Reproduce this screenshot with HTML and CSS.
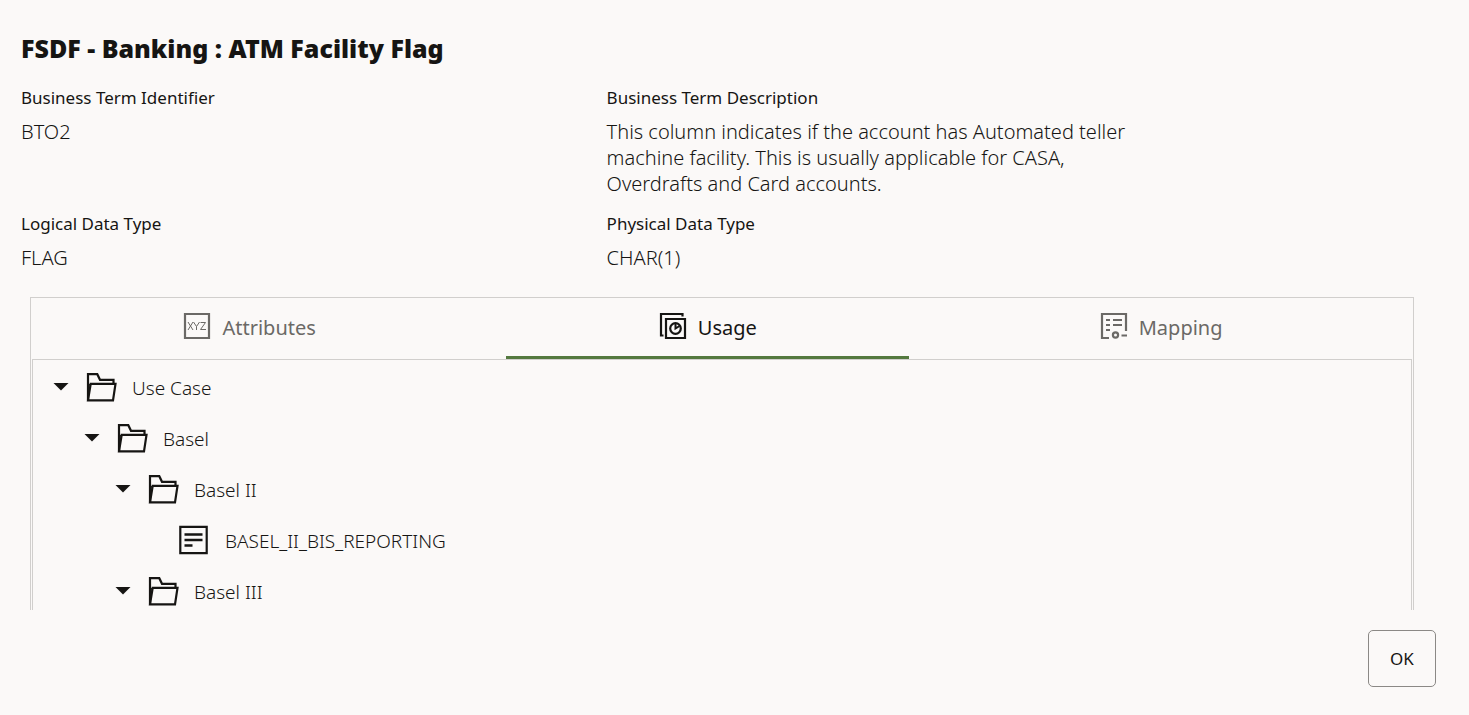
FILE: index.html
```html
<!DOCTYPE html>
<html lang="en">
<head>
  <meta charset="UTF-8" />
  <title>FSDF - Banking : ATM Facility Flag</title>
  <link rel="stylesheet" href="styles.css">
</head>
<body>
  <svg class="sprite" width="0" height="0" aria-hidden="true">
    <symbol id="folder" viewBox="0 0 32 30">
      <path d="M3 28V2.200h9.300l2.700 5.600H28.500V12" fill="none" stroke="currentColor" stroke-width="2.200" />
      <path d="M3 28.300L5.700 11.800H30.500L28 28.300H3z" fill="none" stroke="currentColor" stroke-width="2.200" />
      <path d="M2 12h3L3 26z" fill="currentColor" />
    </symbol>
    <symbol id="document" viewBox="0 0 32 30">
      <path d="M2.300 1.800h26.400v26.400H2.300z" fill="none" stroke="currentColor" stroke-width="2.200" />
      <path d="M6.500 9.500h18M6.500 15h18M6.500 20.500h8" stroke="currentColor" stroke-width="2.400" />
    </symbol>
  </svg>

  <main class="dialog">
    <h1>FSDF - Banking : ATM Facility Flag</h1>

    <dl class="details">
      <div>
        <dt>Business Term Identifier</dt>
        <dd>BTO2</dd>
      </div>
      <div>
        <dt>Business Term Description</dt>
        <dd>This column indicates if the account has Automated teller machine facility. This is usually applicable for CASA, Overdrafts and Card accounts.</dd>
      </div>
      <div class="first">
        <dt>Logical Data Type</dt>
        <dd>FLAG</dd>
      </div>
      <div>
        <dt>Physical Data Type</dt>
        <dd>CHAR(1)</dd>
      </div>
    </dl>

    <section class="panel">
      <div class="tabs" role="tablist">
        <button type="button" class="tab" role="tab" aria-selected="false">
          <svg class="tab-icon" viewBox="0 0 28 28" aria-hidden="true">
            <path d="M2 2h24v24H2z" fill="none" stroke="currentColor" stroke-width="2.200" />
            <path d="M5 10l5 8M10 10L5 18M10.500 10l3 4.500 3-4.500M13.500 14.500V18M17.500 10.500h5L17.500 17.500h5.500" fill="none" stroke="currentColor" stroke-width="1" />
          </svg>
          <span>Attributes</span>
        </button>
        <button type="button" class="tab active" role="tab" aria-selected="true">
          <svg class="tab-icon" viewBox="0 0 28 28" aria-hidden="true">
            <path d="M4.500 23.500H2V2h21.500v2.500" fill="none" stroke="currentColor" stroke-width="2.200" />
            <path d="M7 7h19v19H7z" fill="none" stroke="currentColor" stroke-width="2.200" />
            <circle cx="16.500" cy="16.500" r="5.300" fill="none" stroke="currentColor" stroke-width="2.200" />
            <path d="M16.500 11v5.500l4-2.500" fill="none" stroke="currentColor" stroke-width="2" />
          </svg>
          <span>Usage</span>
        </button>
        <button type="button" class="tab" role="tab" aria-selected="false">
          <svg class="tab-icon" viewBox="0 0 28 28" aria-hidden="true">
            <path d="M9 26H2V2h24v17" fill="none" stroke="currentColor" stroke-width="2.200" />
            <path d="M6 8h4M13 8h9M6 13h4M13 13h9M6 18h4M21.500 23.500h5.500" stroke="currentColor" stroke-width="2.200" />
            <circle cx="15.500" cy="23" r="2.600" fill="none" stroke="currentColor" stroke-width="2.200" />
          </svg>
          <span>Mapping</span>
        </button>
      </div>

      <div class="tab-body" role="tabpanel">
        <ul class="tree">
          <li>
            <div class="node">
              <button type="button" class="toggle" aria-label="Collapse Use Case"></button>
              <svg class="node-icon" aria-hidden="true"><use href="#folder" /></svg>
              <span>Use Case</span>
            </div>
            <ul>
              <li>
                <div class="node">
                  <button type="button" class="toggle" aria-label="Collapse Basel"></button>
                  <svg class="node-icon" aria-hidden="true"><use href="#folder" /></svg>
                  <span>Basel</span>
                </div>
                <ul>
                  <li>
                    <div class="node">
                      <button type="button" class="toggle" aria-label="Collapse Basel II"></button>
                      <svg class="node-icon" aria-hidden="true"><use href="#folder" /></svg>
                      <span>Basel II</span>
                    </div>
                    <ul>
                      <li>
                        <div class="node leaf">
                          <svg class="node-icon" aria-hidden="true"><use href="#document" /></svg>
                          <span>BASEL_II_BIS_REPORTING</span>
                        </div>
                      </li>
                    </ul>
                  </li>
                  <li>
                    <div class="node">
                      <button type="button" class="toggle" aria-label="Collapse Basel III"></button>
                      <svg class="node-icon" aria-hidden="true"><use href="#folder" /></svg>
                      <span>Basel III</span>
                    </div>
                  </li>
                </ul>
              </li>
            </ul>
          </li>
        </ul>
      </div>
    </section>

    <footer class="actions">
      <button type="button" class="ok">OK</button>
    </footer>
  </main>
</body>
</html>
```
FILE: styles.css
```css
* { box-sizing: border-box; }
body { margin: 0; background: #fbf9f8; color: #161513; font-family: "Segoe UI", "Noto Sans", "Open Sans", sans-serif; }
button { font: inherit; color: inherit; background: none; border: 0; padding: 0; cursor: pointer; }
.sprite { display: block; }

.dialog { display: flex; flex-direction: column; height: 100vh; padding: 32px 0 28px; }
h1 { margin: 0 21px 21px; font-size: 25px; line-height: 32px; font-weight: 900; }

.details { display: grid; grid-template-columns: 2fr 2fr 1fr; column-gap: 32px; row-gap: 14px; margin: 0 0 26px 21px; }
.first { grid-column: 1; }
dt { font-size: 17px; line-height: 26px; margin-bottom: 8px; }
dd { margin: 0; padding-right: 30px; font-size: 20px; line-height: 26px; font-weight: 300; }

/* tabs + tree */
.panel { flex: 1; min-height: 0; display: flex; flex-direction: column; margin: 0 55px 0 30px; border: 1px solid #d1cfcd; border-bottom: 0; }
.tabs { display: flex; height: 61px; flex: none; }
.tab { flex: 1 1 auto; display: flex; align-items: center; justify-content: center; gap: 11px; margin-right: 38px; padding-top: 2px; border-bottom: 3px solid transparent; color: #6b6966; font-size: 20px; line-height: 28px; }
.tab.active { color: #161513; border-bottom-color: #54793f; }
.tab-icon { width: 28px; height: 28px; margin-bottom: 4px; }
.tab-body { flex: 1; min-height: 0; margin: 0 1px; border: 1px solid #d1cfcd; border-bottom: 0; overflow: hidden; }

.tree, .tree ul { list-style: none; margin: 0; padding: 0; }
.tree { padding: 1px 0 0 20px; }
.tree ul { padding-left: 31px; }
.node { display: flex; align-items: center; height: 51px; font-size: 19px; font-weight: 300; }
.node span { padding-top: 2px; }
.toggle { width: 16px; height: 8px; margin-right: 16px; background: #161513; clip-path: polygon(0 0, 100% 0, 50% 100%); }
.node-icon { width: 32px; height: 30px; margin-right: 15px; }
.leaf { padding-left: 32px; }

.actions { display: flex; justify-content: flex-end; margin: 20px 33px 0 0; }
.ok { width: 68px; height: 57px; border: 1px solid #8b8986; border-radius: 5px; font-size: 17px; }
```
